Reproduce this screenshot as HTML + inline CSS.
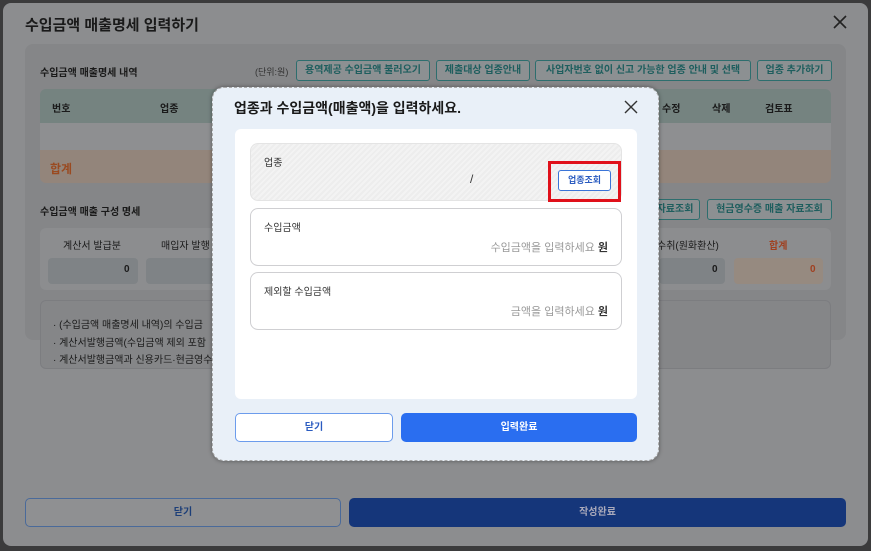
<!DOCTYPE html>
<html><head><meta charset="utf-8"><style>
*{box-sizing:border-box;margin:0;padding:0}
body{width:871px;height:551px;background:#3b3b3c;font-family:"Liberation Sans","Noto Sans CJK KR",sans-serif;position:relative;overflow:hidden}
.a{position:absolute}
.outer{left:3px;top:3px;width:865px;height:543px;background:#8c8d8f;border-radius:8px}
.t{font-size:15px;color:#1a1a1a;font-weight:bold}
.card{left:25px;top:44px;width:821px;height:296px;background:#858688;border-radius:8px}
.btn{position:absolute;border:1px solid #2d6e6e;border-radius:3px;font-size:10px;color:#1e5e5e;background:#8c9092;text-align:center;line-height:19px;height:21px;font-weight:bold}
.sm{font-size:10px;color:#1a1a1a}
.pop{left:212px;top:87px;width:447px;height:374px;background:#e9f0f8;border-radius:12px;border:1px dashed #aaa;box-shadow:0 0 4px rgba(0,0,0,.4)}
.fld{position:absolute;left:250px;width:372px;height:58px;border:1px solid #cfcfd2;border-radius:8px;background:#fff;font-size:10px;color:#333}
</style></head><body>
<div class="a outer"></div>
<div class="a t" style="left:25px;top:14px">수입금액 매출명세 입력하기</div>
<svg class="a" style="left:832px;top:14px" width="16" height="16"><path d="M2 2L14 14M14 2L2 14" stroke="#222" stroke-width="1.6"/></svg>
<div class="a card"></div>
<div class="a sm" style="left:40px;top:64px;font-weight:bold">수입금액 매출명세 내역</div>
<div class="a sm" style="left:255px;top:65px;font-size:9px;color:#333">(단위:원)</div>
<div class="btn" style="left:296px;top:60px;width:134px">용역제공 수입금액 불러오기</div>
<div class="btn" style="left:436px;top:60px;width:94px">제출대상 업종안내</div>
<div class="btn" style="left:535px;top:60px;width:216px">사업자번호 없이 신고 가능한 업종 안내 및 선택</div>
<div class="btn" style="left:757px;top:60px;width:75px">업종 추가하기</div>
<div class="a" style="left:40px;top:89px;width:791px;height:34px;background:#758380;border-radius:6px 6px 0 0"></div>
<div class="a" style="left:40px;top:123px;width:791px;height:27px;background:#8e8f91"></div>
<div class="a" style="left:40px;top:150px;width:791px;height:33px;background:#93857b;border-radius:0 0 6px 6px"></div>
<div class="a sm" style="left:52px;top:100px;font-weight:bold">번호</div><div class="a sm" style="left:160px;top:100px;font-weight:bold">업종</div>
<div class="a sm" style="left:662px;top:100px;font-weight:bold">수정</div><div class="a sm" style="left:712px;top:100px;font-weight:bold">삭제</div><div class="a sm" style="left:765px;top:100px;font-weight:bold">검토표</div>
<div class="a" style="left:50px;top:160px;font-size:12px;color:#9a4a20;font-weight:bold">합계</div>
<div class="a sm" style="left:40px;top:203px;font-weight:bold">수입금액 매출 구성 명세</div>
<div class="btn" style="left:650px;top:199px;width:50px">자료조회</div>
<div class="btn" style="left:707px;top:199px;width:125px">현금영수증 매출 자료조회</div>
<div class="a" style="left:40px;top:228px;width:791px;height:62px;background:#8c8d8f;border-radius:6px"></div>
<div class="a sm" style="left:63px;top:237px">계산서 발급분</div><div class="a sm" style="left:161px;top:237px">매입자 발행</div>
<div class="a sm" style="left:657px;top:237px">수취(원화환산)</div><div class="a sm" style="left:769px;top:237px;color:#a04020;font-weight:bold">합계</div>
<div class="a" style="left:48px;top:258px;width:90px;height:26px;background:#7f8386;border-radius:4px"></div>
<div class="a sm" style="left:124px;top:264px;font-weight:bold">0</div>
<div class="a" style="left:146px;top:258px;width:70px;height:26px;background:#7f8386;border-radius:4px"></div>
<div class="a" style="left:659px;top:258px;width:66px;height:26px;background:#7f8386;border-radius:4px"></div>
<div class="a sm" style="left:712px;top:264px;font-weight:bold">0</div>
<div class="a" style="left:734px;top:258px;width:89px;height:26px;background:#968a80;border-radius:4px"></div>
<div class="a sm" style="left:810px;top:264px;color:#a04020;font-weight:bold">0</div>
<div class="a" style="left:40px;top:300px;width:791px;height:69px;background:#858688;border:1px solid #7c7d80;border-radius:6px"></div>
<div class="a sm" style="left:53px;top:316px">· (수입금액 매출명세 내역)의 수입금</div>
<div class="a sm" style="left:53px;top:334px">· 계산서발행금액(수입금액 제외 포함</div>
<div class="a sm" style="left:53px;top:351px">· 계산서발행금액과 신용카드·현금영수</div>
<div class="a" style="left:25px;top:498px;width:316px;height:29px;border:1px solid #4a6a9a;border-radius:5px;background:#8f9092;text-align:center;line-height:27px;font-size:10px;color:#1c3e78;font-weight:bold">닫기</div>
<div class="a" style="left:349px;top:498px;width:497px;height:29px;border-radius:5px;background:#15367a;text-align:center;line-height:29px;font-size:10px;color:#aab;font-weight:bold">작성완료</div>

<div class="a pop"></div>
<div class="a" style="left:234px;top:98px;font-size:14px;color:#1a1a1a;font-weight:bold">업종과 수입금액(매출액)을 입력하세요.</div>
<svg class="a" style="left:624px;top:100px" width="14" height="14"><path d="M1 1L13 13M13 1L1 13" stroke="#333" stroke-width="1.4"/></svg>
<div class="a" style="left:235px;top:129px;width:402px;height:270px;background:#fff;border-radius:6px"></div>
<div class="fld" style="top:143px;background:repeating-linear-gradient(135deg,#ededed 0 2px,#f3f3f3 2px 4px);border-color:#e4e4e4"><span class="a" style="left:13px;top:10px">업종</span><span class="a" style="left:219px;top:28px;font-size:12px">/</span></div>
<div class="a" style="left:548px;top:161px;width:73px;height:41px;border:3px solid #e0101a"></div>
<div class="a" style="left:558px;top:170px;width:53px;height:21px;border:1px solid #3a74d8;border-radius:3px;background:#fff;font-size:9px;color:#2a5bc0;text-align:center;line-height:19px;font-weight:bold">업종조회</div>
<div class="fld" style="top:208px"><span class="a" style="left:13px;top:10px">수입금액</span><span class="a" style="right:13px;top:30px;font-size:11px;color:#999">수입금액을 입력하세요 <b style="color:#333">원</b></span></div>
<div class="fld" style="top:272px"><span class="a" style="left:13px;top:10px">제외할 수입금액</span><span class="a" style="right:13px;top:30px;font-size:11px;color:#999">금액을 입력하세요 <b style="color:#333">원</b></span></div>
<div class="a" style="left:235px;top:413px;width:158px;height:29px;border:1px solid #6c9cec;border-radius:5px;background:#fff;text-align:center;line-height:27px;font-size:10px;color:#2a5bc0;font-weight:bold">닫기</div>
<div class="a" style="left:401px;top:413px;width:236px;height:29px;border-radius:5px;background:#2a6ef0;text-align:center;line-height:29px;font-size:10px;color:#fff;font-weight:bold">입력완료</div>
</body></html>
